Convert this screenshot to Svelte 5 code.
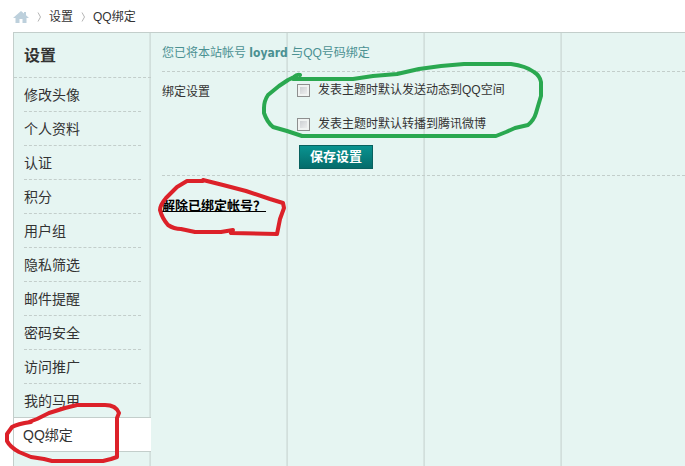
<script>
  let menu = [
    '修改头像',
    '个人资料',
    '认证',
    '积分',
    '用户组',
    '隐私筛选',
    '邮件提醒',
    '密码安全',
    '访问推广',
    '我的马甲',
    'QQ绑定'
  ];
  let current = 'QQ绑定';

  let options = [
    { id: 'feed', label: '发表主题时默认发送动态到QQ空间', checked: false },
    { id: 'weibo', label: '发表主题时默认转播到腾讯微博', checked: false }
  ];
</script>

<div class="page">
  <nav class="crumbs">
    <a class="home" href="#home" aria-label="首页">
      <svg width="16" height="12" viewBox="0 0 16 12">
        <path d="M8 0 L11 2.500 V1 H13 V4.300 L16 7 H13.500 V12 H9.500 V8 H6.500 V12 H2.500 V7 H0 Z" fill="#bdd0dc" />
      </svg>
    </a>
    <svg class="sep" width="5" height="10" viewBox="0 0 5 10">
      <path d="M1 0.500 L3.500 5 L1 9.500" />
    </svg>
    <a href="#settings">设置</a>
    <svg class="sep" width="5" height="10" viewBox="0 0 5 10">
      <path d="M1 0.500 L3.500 5 L1 9.500" />
    </svg>
    <span>QQ绑定</span>
  </nav>

  <div class="panel">
    <aside class="sidebar">
      <h2>设置</h2>
      <ul>
        {#each menu as item}
          <li class:active={item === current}>
            <a href={`#${item}`}>{item}</a>
          </li>
        {/each}
      </ul>
    </aside>

    <main class="content">
      <p class="status">您已将本站帐号 <strong>loyard</strong> 与QQ号码绑定</p>
      <form class="bind">
        <div class="bind-title">绑定设置</div>
        <div class="bind-fields">
          {#each options as option}
            <label class="option" for={option.id}>
              <input type="checkbox" id={option.id} bind:checked={option.checked} />
              {option.label}
            </label>
          {/each}
          <button type="button">保存设置</button>
        </div>
      </form>
      <a class="unbind" href="#unbind">解除已绑定帐号？</a>
    </main>
  </div>

  <!-- hand-drawn marks over the page -->
  <svg class="marks" width="685" height="466" viewBox="0 0 685 466">
    <path
      class="green"
      d="M300 75 Q297 74 294 77 L288 80 L279 86 L268 95 Q264 101 264 108 V113 Q267 122 273 127 L287 131 L302 136 H496 L506 132 L515 128 L528 125 Q534 120 536 113 L541 96 V82 Q540 76 534 72 Q526 66 511 64 H464 L441 66 L419 69 L397 74 L373 76 L353 79 H293"
    />
    <path
      class="red"
      d="M203 181 H187 L177 187 L166 198 Q160 205 160 210 Q162 218 168 225 Q174 229 181 229 L195 232 L221 232 L233 230 L231 233 L277 234 L280 219 L284 208 L283 203 L270 199 L246 191 L223 185 L203 180"
    />
    <path
      class="red"
      d="M31 422 Q17 424 12 427 L7 434 V441 Q10 447 19 452 L31 457 L44 459 L52 461 H103 L111 459 L117 457 V418 L119 413 Q116 405 105 405 H77 L65 408 L49 413 L37 419 L29 422"
    />
  </svg>
</div>

<style>
  :global(body) {
    margin: 0;
    background: #fff;
  }

  .page {
    position: relative;
    display: flex;
    flex-direction: column;
    box-sizing: border-box;
    height: 100vh;
    overflow: hidden;
    padding-left: 13px;
    color: #333;
    font: 12px/20px 'Liberation Sans', 'Noto Sans CJK SC', sans-serif;
  }

  a {
    color: inherit;
    text-decoration: none;
  }

  .crumbs {
    display: flex;
    align-items: center;
    flex: none;
    height: 30px;
    padding-top: 2px;
  }

  .home {
    display: flex;
  }

  .sep {
    margin: 0 7px 0 8px;
    fill: none;
    stroke: #b5b5b5;
  }

  .panel {
    display: flex;
    flex: 1;
    border-top: 1px solid #c3cecb;
    border-left: 1px solid #c3cecb;
    background: repeating-linear-gradient(
      to right,
      #e6f5f2 0,
      #e6f5f2 135px,
      #dae8e5 135px,
      #cfdcd9 137px
    );
  }

  .sidebar {
    flex: none;
    width: 137px;
  }

  .sidebar h2 {
    margin: 0;
    padding: 2px 10px 0;
    border-bottom: 1px dashed #c3cecb;
    font-size: 16px;
    line-height: 42px;
  }

  .sidebar ul {
    margin: 0;
    padding: 0;
    list-style: none;
  }

  .sidebar li {
    margin: 0 10px;
    padding-top: 2px;
    border-bottom: 1px dashed #c3cecb;
    font-size: 14px;
    line-height: 31px;
  }

  .sidebar li a {
    display: block;
  }

  .sidebar li:nth-last-child(2) {
    border-bottom: 0;
  }

  .sidebar li.active {
    margin: 0;
    padding-left: 9px;
    border-top: 1px solid #c3cecb;
    border-bottom: 1px solid #c3cecb;
    background: #fff;
  }

  .content {
    flex: 1;
    padding-left: 11px;
  }

  .status {
    margin: 0;
    padding-top: 2px;
    border-bottom: 1px dashed #c3cecb;
    color: #4b9192;
    line-height: 36px;
  }

  .status strong {
    font-family: 'DejaVu Sans Condensed', 'Noto Sans', sans-serif;
  }

  .bind {
    display: flex;
    padding: 8px 0 6px;
    border-bottom: 1px dashed #c3cecb;
  }

  .bind-title {
    width: 135px;
    padding-top: 2px;
  }

  .option {
    display: flex;
    align-items: center;
    margin-bottom: 14px;
  }

  .option input {
    appearance: none;
    box-sizing: border-box;
    width: 13px;
    height: 13px;
    margin: 0 8px 0 0;
    border: 1px solid #8e8f8f;
    background: linear-gradient(135deg, #c4c8cc, #f5f5f5);
    box-shadow: inset 0 0 0 2px #f0f3f2;
  }

  .option input:checked {
    background: #00797a;
  }

  button {
    display: block;
    height: 24px;
    margin: -3px 0 0 2px;
    padding: 0 10px;
    border: 1px solid #08615f;
    background: linear-gradient(#099390, #056c6b);
    color: #fff;
    font: bold 13px/20px 'Liberation Sans', 'Noto Sans CJK SC', sans-serif;
  }

  .unbind {
    display: inline-block;
    margin-top: 20px;
    color: #000;
    font-size: 13px;
    font-weight: bold;
    text-decoration: underline;
  }

  .marks {
    position: absolute;
    top: 0;
    left: 0;
    fill: none;
    stroke-width: 4;
    stroke-linecap: round;
    stroke-linejoin: round;
    pointer-events: none;
  }

  .green {
    stroke: #2aa850;
  }

  .red {
    stroke: #dc2129;
  }
</style>
